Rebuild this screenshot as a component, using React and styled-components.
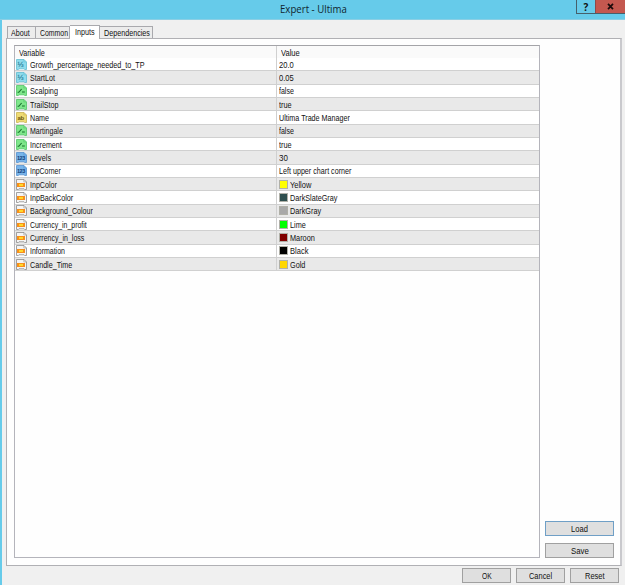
import React, { useLayoutEffect, useRef, useState } from "react";
import styled, { createGlobalStyle } from "styled-components";

const GlobalStyle = createGlobalStyle`
  * { box-sizing: border-box; }
  body {
    margin: 0;
    overflow: hidden;
    background: #f0f0f0;
    font: 9.4px/11px "Liberation Sans", Arial, sans-serif;
    color: #111;
  }
`;

const Window = styled.div`
  width: 625px;
  height: 585px;
  display: flex;
  flex-direction: column;
  background: #f0f0f0;
`;

const TitleBar = styled.header`
  position: relative;
  height: 20px;
  flex: none;
  display: flex;
  justify-content: center;
  padding: 2px 0 0 1px;
  background: #66cbea;
  border-bottom: 1px solid #8ccfe4;
  font: 10.5px/15px "Open Sans", "Noto Sans", sans-serif;
  color: #10262e;
`;

const Controls = styled.div`
  position: absolute;
  top: 0;
  right: 0;
  display: flex;
  height: 14px;
  border: 1px solid #46606b;
  border-top: 0;
  border-right: 0;
`;

const Control = styled.div`
  width: ${({ $close }) => ($close ? 30 : 18)}px;
  display: flex;
  align-items: center;
  justify-content: center;
  background: ${({ $close }) => ($close ? "#c4584f" : "#66cbea")};
  border-left: ${({ $close }) => ($close ? "1px solid #8d4a4a" : "0")};
  font: bold 10px/12px "Open Sans", sans-serif;
  color: #111;
`;

const Body = styled.main`
  flex: 1;
  display: flex;
  flex-direction: column;
  padding: 5px 3px 0 4px;
  border-left: 2px solid #66cbea;
`;

const Tabs = styled.nav`
  height: 13px;
  display: flex;
  align-items: flex-end;
  padding-left: 1px;
`;

const Tab = styled.div`
  width: ${({ $w }) => $w}px;
  height: ${({ $active }) => ($active ? 14 : 12)}px;
  margin-bottom: ${({ $active }) => ($active ? -1 : 0)}px;
  padding-left: ${({ $active, $first }) => ($active ? 5 : $first ? 3 : 4)}px;
  z-index: ${({ $active }) => ($active ? 1 : 0)};
  border: 1px solid #a9a9ad;
  border-bottom: 0;
  border-left-width: ${({ $first }) => ($first ? 1 : 0)}px;
  background: ${({ $active }) => ($active ? "#fff" : "#ececec")};
`;

const Page = styled.section`
  height: 528px;
  display: flex;
  padding: 6px 6px 7px 7px;
  background: #fefefe;
  border: 1px solid #b0b0b4;
  border-right: 2px solid #c9c9cd;
`;

const List = styled.div`
  width: 526px;
  height: 513px;
  border: 1px solid #b4b4bb;
  border-top-color: #a4a4a8;
  background: #fefefe;
`;

const Header = styled.div`
  height: 12px;
  display: flex;
  background: #fafafa;
`;

const Row = styled.div`
  height: 13.34px;
  display: flex;
  background: ${({ $odd }) => ($odd ? "#e9e9e9" : "#fff")};
  border-bottom: 1px solid #d0d0d0;
`;

const Cell = styled.div`
  width: 262px;
  display: flex;
  align-items: center;
  padding-left: ${({ $head, $name }) => ($head ? 4 : $name ? 1 : 2)}px;
  border-right: ${({ $name }) => ($name ? "1px solid #d0d0d0" : "0")};
`;

const Swatch = styled.span`
  width: 9px;
  height: 9px;
  margin-right: 1.5px;
  border: 1px solid #b0b0a8;
  background: ${({ $color }) => $color};
`;

const Side = styled.aside`
  flex: 1;
  display: flex;
  flex-direction: column;
  align-items: flex-end;
  justify-content: flex-end;
  gap: 7px;
`;

const Footer = styled.footer`
  display: flex;
  justify-content: flex-end;
  gap: 5px;
  padding: 2px 3px 0 0;
`;

const Button = styled.button`
  width: ${({ $wide }) => ($wide ? 69 : 49)}px;
  height: 15px;
  padding: 0;
  display: flex;
  align-items: center;
  justify-content: center;
  font: inherit;
  color: inherit;
  background: #dfdfdf;
  border: 1px solid ${({ $focus }) => ($focus ? "#6f9fc6" : "#a0a0a0")};
`;

const TextBox = styled.span`
  display: block;
  flex: none;
  white-space: nowrap;
`;

const TextRun = styled.span`
  display: inline-block;
  transform-origin: 0 50%;
`;

// Condenses a label to the width it has in the dialog font
function Text({ w, children }) {
  const ref = useRef(null);
  const [scale, setScale] = useState(1);
  useLayoutEffect(() => {
    setScale(w / ref.current.offsetWidth);
  }, [w, children]);
  return (
    <TextBox style={{ width: w }}>
      <TextRun ref={ref} style={{ transform: `scaleX(${scale})` }}>{children}</TextRun>
    </TextBox>
  );
}

const IconSvg = styled.svg`
  display: block;
  flex: none;
  margin-right: 2.5px;
`;

const iconColors = {
  double: ["#8fdcec", "#5fbcd2"],
  bool: ["#7ee68a", "#52c567"],
  string: ["#eedb74", "#c9b350"],
  int: ["#78b4ea", "#5592cf"],
  color: ["#f4f4f4", "#8c8c8c"],
};

const Glyph = styled.text`
  font: bold ${({ $size }) => $size || 6}px "Liberation Sans", sans-serif;
  letter-spacing: -0.4px;
  fill: ${({ $fill }) => $fill};
`;

function TypeIcon({ type }) {
  const [fill, stroke] = iconColors[type];
  return (
    <IconSvg width="11" height="11" viewBox="0 0 11 11">
      <path d="M.5.5H8L10.5 3v7.5H8.6L8 9.8H3l-.6.7H.5Z" fill={fill} stroke={stroke} strokeWidth=".8" />
      <path d="M7.8.6V3h2.6" fill="none" stroke={stroke} strokeWidth=".5" />
      {type === "double" && <Glyph x="1.2" y="7.8" $size={8} $fill="#287f9b">½</Glyph>}
      {type === "bool" && <path d="M1.6 7.3h1.2L5.6 4M6 7h2.8" fill="none" stroke="#16702b" strokeWidth="1.1" />}
      {type === "string" && <Glyph x="1.6" y="7.6" $fill="#6b5810">ab</Glyph>}
      {type === "int" && <Glyph x=".9" y="7.5" $size={5.5} $fill="#123f7a">123</Glyph>}
      {type === "color" && (
        <>
          <rect x="1" y="4" width="8" height="4" fill="#f88f1c" />
          <rect x="3" y="5" width="4" height="2" fill="#ffd92a" />
        </>
      )}
    </IconSvg>
  );
}

// type, name, name width, value, value width, swatch colour
const inputs = [
  ["double", "Growth_percentage_needed_to_TP", 114.5, "20.0", 14.5],
  ["double", "StartLot", 25, "0.05", 14.5],
  ["bool", "Scalping", 28, "false", 15],
  ["bool", "TrailStop", 28.5, "true", 12.5],
  ["string", "Name", 19, "Ultima Trade Manager", 71],
  ["bool", "Martingale", 33, "false", 15],
  ["bool", "Increment", 32, "true", 12.5],
  ["int", "Levels", 21, "30", 8.5],
  ["int", "InpCorner", 31, "Left upper chart corner", 72.5],
  ["color", "InpColor", 26.5, "Yellow", 21.5, "#ffff00"],
  ["color", "InpBackColor", 43, "DarkSlateGray", 47, "#2f4f4f"],
  ["color", "Background_Colour", 63, "DarkGray", 31, "#a9a9a9"],
  ["color", "Currency_in_profit", 57, "Lime", 15.5, "#00ff00"],
  ["color", "Currency_in_loss", 54, "Maroon", 25, "#800000"],
  ["color", "Information", 35, "Black", 18.5, "#000000"],
  ["color", "Candle_Time", 42, "Gold", 15.5, "#ffd700"],
];

export default function App() {
  return (
    <>
      <GlobalStyle />
      <Window>
        <TitleBar>
          <Text w={67}>Expert - Ultima</Text>
          <Controls>
            <Control>?</Control>
            <Control $close>
              <svg width="7" height="7" viewBox="0 0 7 7">
                <path d="M1 .8 6 6.2M6 .8 1 6.2" stroke="#1c0b0b" strokeWidth="1.7" />
              </svg>
            </Control>
          </Controls>
        </TitleBar>
        <Body>
          <Tabs>
            <Tab $w={29} $first><Text w={19}>About</Text></Tab>
            <Tab $w={34}><Text w={28}>Common</Text></Tab>
            <Tab $w={30} $active><Text w={20}>Inputs</Text></Tab>
            <Tab $w={53}><Text w={46}>Dependencies</Text></Tab>
          </Tabs>
          <Page>
            <List>
              <Header>
                <Cell $name $head><Text w={26}>Variable</Text></Cell>
                <Cell $head><Text w={18.5}>Value</Text></Cell>
              </Header>
              {inputs.map(([type, name, nameWidth, value, valueWidth, color], i) => (
                <Row key={name} $odd={i % 2 === 1}>
                  <Cell $name>
                    <TypeIcon type={type} />
                    <Text w={nameWidth}>{name}</Text>
                  </Cell>
                  <Cell>
                    {color && <Swatch $color={color} />}
                    <Text w={valueWidth}>{value}</Text>
                  </Cell>
                </Row>
              ))}
            </List>
            <Side>
              <Button $wide $focus><Text w={17}>Load</Text></Button>
              <Button $wide><Text w={17.5}>Save</Text></Button>
            </Side>
          </Page>
          <Footer>
            <Button><Text w={10}>OK</Text></Button>
            <Button><Text w={23}>Cancel</Text></Button>
            <Button><Text w={20}>Reset</Text></Button>
          </Footer>
        </Body>
      </Window>
    </>
  );
}
